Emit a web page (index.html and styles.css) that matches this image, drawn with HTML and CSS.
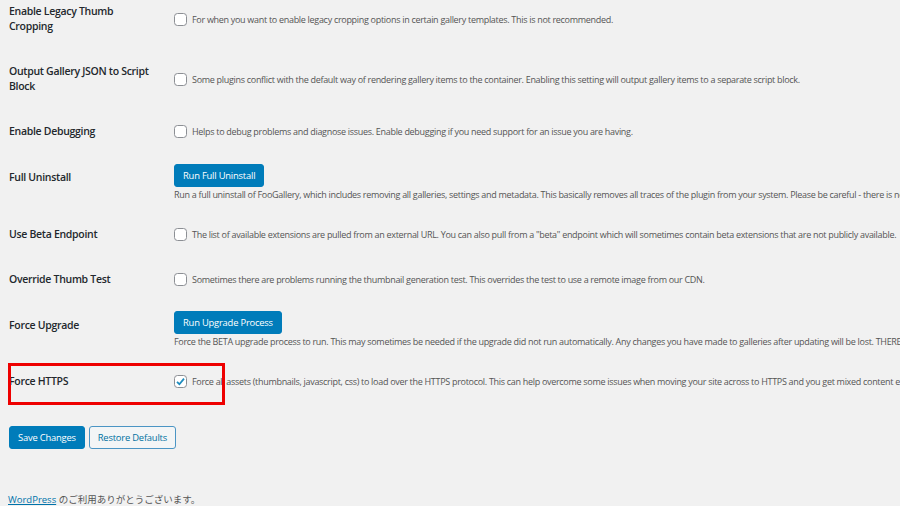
FILE: index.html
```html
<!doctype html>
<html>
  <head>
    <meta charset="utf-8" />
    <title>FooGallery Settings</title>
    <link rel="stylesheet" href="styles.css">
  </head>
  <body>
    <div class="wrap">
      <div class="form-table">
        <div class="row">
          <div class="label">Enable Legacy Thumb Cropping</div>
          <div class="field">
            <label class="check"><span class="box"></span><span class="desc">For when you want to enable legacy cropping options in certain gallery templates. This is not recommended.</span></label>
          </div>
        </div>
        <div class="row">
          <div class="label">Output Gallery JSON to Script Block</div>
          <div class="field">
            <label class="check"><span class="box"></span><span class="desc">Some plugins conflict with the default way of rendering gallery items to the container. Enabling this setting will output gallery items to a separate script block.</span></label>
          </div>
        </div>
        <div class="row">
          <div class="label">Enable Debugging</div>
          <div class="field">
            <label class="check"><span class="box"></span><span class="desc">Helps to debug problems and diagnose issues. Enable debugging if you need support for an issue you are having.</span></label>
          </div>
        </div>
        <div class="row action">
          <div class="label">Full Uninstall</div>
          <div class="field">
            <button class="button primary">Run Full Uninstall</button>
            <div class="desc">Run a full uninstall of FooGallery, which includes removing all galleries, settings and metadata. This basically removes all traces of the plugin from your system. Please be careful - there is no undo!</div>
          </div>
        </div>
        <div class="row">
          <div class="label">Use Beta Endpoint</div>
          <div class="field">
            <label class="check"><span class="box"></span><span class="desc">The list of available extensions are pulled from an external URL. You can also pull from a "beta" endpoint which will sometimes contain beta extensions that are not publicly available.</span></label>
          </div>
        </div>
        <div class="row">
          <div class="label">Override Thumb Test</div>
          <div class="field">
            <label class="check"><span class="box"></span><span class="desc">Sometimes there are problems running the thumbnail generation test. This overrides the test to use a remote image from our CDN.</span></label>
          </div>
        </div>
        <div class="row action">
          <div class="label">Force Upgrade</div>
          <div class="field">
            <button class="button primary">Run Upgrade Process</button>
            <div class="desc">Force the BETA upgrade process to run. This may sometimes be needed if the upgrade did not run automatically. Any changes you have made to galleries after updating will be lost. THERE IS NO UNDO!</div>
          </div>
        </div>
        <div class="row">
          <div class="label">Force HTTPS</div>
          <div class="field">
            <label class="check"><span class="box checked"><svg viewBox="0 0 13 13" width="13" height="13"><path d="M3 6.8 L5.4 9.2 L10 3.6" fill="none" stroke="#1e8cbe" stroke-width="1.8"/></svg></span><span class="desc">Force all assets (thumbnails, javascript, css) to load over the HTTPS protocol. This can help overcome some issues when moving your site across to HTTPS and you get mixed content errors.</span></label>
          </div>
          <div class="highlight"></div>
        </div>
      </div>

      <div class="submit">
        <button class="button primary">Save Changes</button>
        <button class="button secondary">Restore Defaults</button>
      </div>

      <div class="footer">
        <a href="#">WordPress</a> のご利用ありがとうございます。
      </div>
    </div>
  </body>
</html>
```

FILE: styles.css
```css
html, body {
    overflow: hidden;
}
body {
    margin: 0;
    background: #f1f1f1;
    color: #23282d;
    font-family: "Open Sans", "Noto Sans CJK JP", sans-serif;
}
.wrap {
    padding-left: 9px;
}
.form-table {
    margin-top: -11px;
}
.row {
    display: flex;
    align-items: center;
    padding: 15px 0;
    position: relative;
}
.row.action {
    align-items: flex-start;
    padding: 9.5px 0 10px;
}
.label {
    flex: none;
    width: 145px;
    margin-right: 20px;
    font-size: 10.5px;
    font-weight: 600;
    letter-spacing: -0.3px;
    line-height: 15px;
}
.row.action .label {
    padding-top: 6.5px;
}
.field {
    flex: 1;
    min-width: 0;
    white-space: nowrap;
}
.row.action .field {
    display: flex;
    flex-direction: column;
    align-items: flex-start;
}
.check {
    display: flex;
    align-items: center;
    gap: 5px;
}
.box {
    flex: none;
    width: 13px;
    height: 13px;
    box-sizing: border-box;
    border: 1px solid #8c8f94;
    border-radius: 3.5px;
    background: #fff;
    position: relative;
}
.box svg {
    position: absolute;
    left: -1px;
    top: -1px;
}
.desc {
    display: block;
    font-size: 9px;
    letter-spacing: -0.3px;
    line-height: 15px;
    color: #555;
}
.button {
    display: block;
    flex: none;
    height: 23px;
    padding: 0 8px;
    border: 1px solid;
    border-radius: 3px;
    font-family: inherit;
    font-size: 9.4px;
    letter-spacing: -0.2px;
    line-height: 21px;
    cursor: pointer;
}
.primary {
    background: #007cba;
    border-color: #007cba;
    color: #fff;
}
.secondary {
    background: #f3f5f6;
    border-color: #4b95c4;
    color: #0071a1;
}
.highlight {
    position: absolute;
    left: -1px;
    top: 3.5px;
    width: 217px;
    height: 42px;
    box-sizing: border-box;
    border: 3px solid #ee0000;
}
.submit {
    display: flex;
    gap: 4px;
    margin-top: 21.5px;
}
.footer {
    margin-top: 43px;
    margin-left: -1px;
    font-size: 9.5px;
    line-height: 15px;
    color: #555;
}
.footer a {
    color: #0073aa;
}
```
